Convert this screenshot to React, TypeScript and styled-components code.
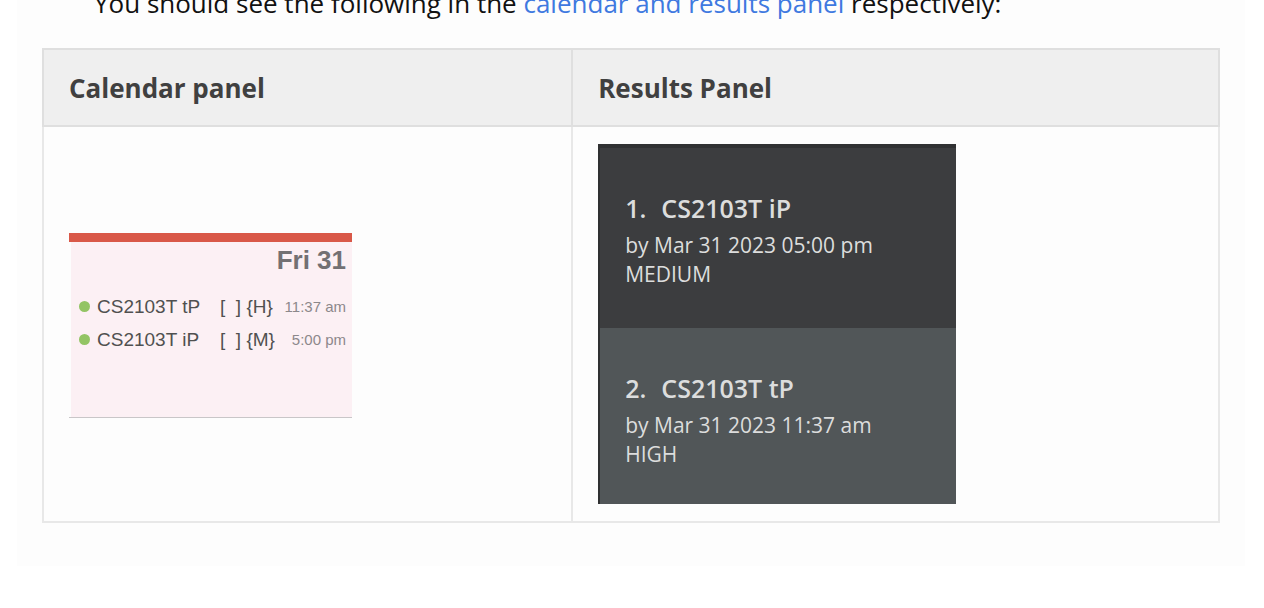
import React from "react";
import styled, { createGlobalStyle } from "styled-components";

const GlobalStyle = createGlobalStyle`
  * { box-sizing: border-box; }
  body {
    margin: 0;
    background: #ffffff;
    font-family: "Open Sans", "Noto Sans", sans-serif;
    color: #111111;
  }
`;

const Page = styled.div`
  padding: 0 19px 43px 17px;
  overflow: hidden;
`;

const Panel = styled.main`
  margin-top: -16px;
  padding: 0 25px 43px;
  background: #fdfdfd;
`;

const Intro = styled.p`
  margin: 0 0 26px;
  padding-left: 52px;
  font-size: 26px;
  line-height: 38px;
  white-space: nowrap;
`;

const PanelLink = styled.a`
  color: #3f79e0;
  text-decoration: none;
`;

const Table = styled.table`
  width: 100%;
  table-layout: fixed;
  border-collapse: collapse;
`;

const Column = styled.col<{ $width?: string }>`
  width: ${(p) => p.$width ?? "auto"};
`;

const HeadCell = styled.th`
  height: 77px;
  padding: 0 25px;
  border: 2px solid #dfdfdf;
  background: #efefef;
  color: #404040;
  font-size: 26px;
  font-weight: 700;
  line-height: 38px;
  text-align: left;
`;

const Cell = styled.td`
  padding: 17px 25px;
  border: 2px solid #e8e8e8;
  vertical-align: middle;
`;

const Calendar = styled.section`
  width: 283px;
  height: 185px;
  margin-top: 3px;
  padding: 0 6px 0 10px;
  border-top: 9px solid #d95848;
  border-bottom: 1px solid #c9c6c8;
  background: linear-gradient(90deg, #fdfdfd 2px, #fcf0f4 2px);
  font-family: "Liberation Sans", Arial, sans-serif;
  color: #505050;
`;

const Day = styled.h3`
  margin: 0 0 12px;
  padding: 2px 0;
  font-size: 26px;
  line-height: 32px;
  text-align: right;
  color: #737073;
`;

const Entries = styled.ul`
  margin: 0;
  padding: 0;
  list-style: none;
`;

const Entry = styled.li`
  display: grid;
  grid-template-columns: 18px 123px 1fr auto;
  align-items: center;
  font-size: 19px;
  line-height: 33px;
  white-space: nowrap;
`;

const Dot = styled.span`
  width: 11px;
  height: 11px;
  border-radius: 50%;
  background: #93c464;
`;

const Flags = styled.span`
  white-space: pre;
`;

const Time = styled.time`
  font-size: 15px;
  color: #8c888b;
`;

const Results = styled.ol`
  width: 358px;
  margin: 0;
  padding: 0;
  border-top: 4px solid #303132;
  border-left: 2px solid #303132;
  list-style: none;
`;

const Result = styled.li<{ $alt?: boolean }>`
  padding: ${(p) => (p.$alt ? "42px 25px 35px" : "42px 25px 39px")};
  background: ${(p) => (p.$alt ? "#515658" : "#3c3d3f")};
  color: #dcdddd;
  font-size: 21px;
  line-height: 29px;
`;

const Title = styled.h3`
  display: flex;
  gap: 15px;
  margin: 0 0 4px;
  font-size: 25px;
  font-weight: 600;
  line-height: 37px;
`;

const Detail = styled.p`
  margin: 0;
`;

const entries = [
  { title: "CS2103T tP", flags: "[  ] {H}", time: "11:37 am" },
  { title: "CS2103T iP", flags: "[  ] {M}", time: "5:00 pm" },
];

const results = [
  { title: "CS2103T iP", due: "by Mar 31 2023 05:00 pm", priority: "MEDIUM" },
  { title: "CS2103T tP", due: "by Mar 31 2023 11:37 am", priority: "HIGH" },
];

export default function App() {
  return (
    <Page>
      <GlobalStyle />
      <Panel>
        <Intro>
          You should see the following in the{" "}
          <PanelLink href="#panels">calendar and results panel</PanelLink> respectively:
        </Intro>
        <Table id="panels">
          <colgroup>
            <Column $width="45%" />
            <Column />
          </colgroup>
          <thead>
            <tr>
              <HeadCell scope="col">Calendar panel</HeadCell>
              <HeadCell scope="col">Results Panel</HeadCell>
            </tr>
          </thead>
          <tbody>
            <tr>
              <Cell>
                <Calendar>
                  <Day>Fri 31</Day>
                  <Entries>
                    {entries.map((e) => (
                      <Entry key={e.title}>
                        <Dot />
                        <span>{e.title}</span>
                        <Flags>{e.flags}</Flags>
                        <Time>{e.time}</Time>
                      </Entry>
                    ))}
                  </Entries>
                </Calendar>
              </Cell>
              <Cell>
                <Results>
                  {results.map((r, i) => (
                    <Result key={r.title} $alt={i % 2 === 1}>
                      <Title>
                        <span>{i + 1}.</span>
                        <span>{r.title}</span>
                      </Title>
                      <Detail>{r.due}</Detail>
                      <Detail>{r.priority}</Detail>
                    </Result>
                  ))}
                </Results>
              </Cell>
            </tr>
          </tbody>
        </Table>
      </Panel>
    </Page>
  );
}
